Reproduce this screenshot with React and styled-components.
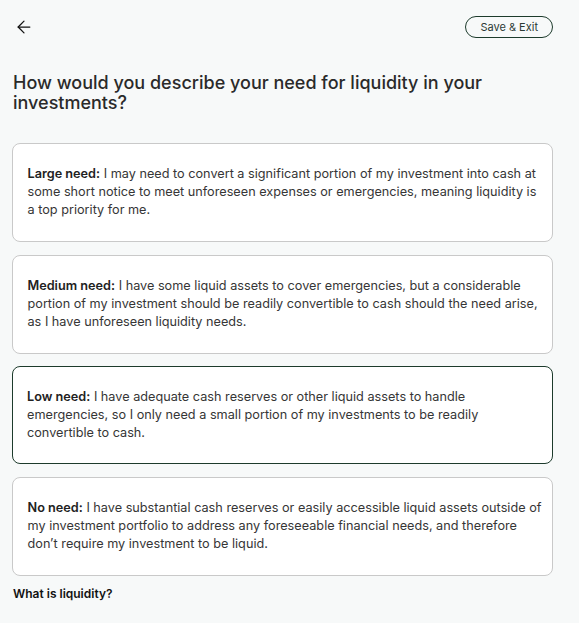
import React, { useState } from 'react';
import styled, { createGlobalStyle } from 'styled-components';
import { ArrowLeft } from 'lucide-react';

const GlobalStyle = createGlobalStyle`
  body {
    margin: 0;
    background-color: #f7f9f9;
    font-family: Inter, "Noto Sans", sans-serif;
  }
`;

const Page = styled.div`
  padding: 14px 26px 20px 12px;
  color: #2b2b2b;
`;

const TopBar = styled.div`
  display: flex;
  justify-content: space-between;
  align-items: center;
  height: 26px;
`;

const BackButton = styled.button`
  display: flex;
  align-items: center;
  background: none;
  border: none;
  padding: 0 0 0 2px;
  color: #111;
  cursor: pointer;
`;

const SaveButton = styled.button`
  height: 22px;
  padding: 0 14px;
  border: 1px solid #1d3b2c;
  border-radius: 999px;
  background: transparent;
  font-family: Inter, sans-serif;
  font-size: 11px;
  color: #2b3a35;
  cursor: pointer;
`;

const Title = styled.h1`
  margin: 33px 0 30px 1px;
  font-size: 18px;
  font-weight: 500;
  line-height: 20px;
  color: #2a2a2a;
  max-width: 500px;
`;

const OptionList = styled.div`
  display: flex;
  flex-direction: column;
  gap: 12.5px;
`;

const Option = styled.div`
  background: #fff;
  border: ${(p) => (p.$selected ? '1.5px solid #1d3b2c' : '1px solid #c9c9c9')};
  border-radius: 8px;
  padding: ${(p) => (p.$selected ? '20.5px 10px 21.5px 14px' : '21px 10.5px 22px 14.5px')};
  font-size: 12.7px;
  line-height: 18px;
  color: #363636;
  cursor: pointer;
`;

const Label = styled.span`
  font-weight: 600;
  color: #222;
`;

const HelpLink = styled.div`
  margin: 10px 0 0 1px;
  font-size: 12px;
  font-weight: 600;
  color: #111;
`;

const options = [
  {
    label: 'Large need',
    text: 'I may need to convert a significant portion of my investment into cash at some short notice to meet unforeseen expenses or emergencies, meaning liquidity is a top priority for me.',
  },
  {
    label: 'Medium need',
    text: 'I have some liquid assets to cover emergencies, but a considerable portion of my investment should be readily convertible to cash should the need arise, as I have unforeseen liquidity needs.',
  },
  {
    label: 'Low need',
    text: 'I have adequate cash reserves or other liquid assets to handle emergencies, so I only need a small portion of my investments to be readily convertible to cash.',
  },
  {
    label: 'No need',
    text: 'I have substantial cash reserves or easily accessible liquid assets outside of my investment portfolio to address any foreseeable financial needs, and therefore don\u2019t require my investment to be liquid.',
  },
];

const App = () => {
  const [selected, setSelected] = useState(2);

  return (
    <>
      <GlobalStyle />
      <Page>
        <TopBar>
          <BackButton aria-label="Back">
            <ArrowLeft size={20} strokeWidth={1.5} />
          </BackButton>
          <SaveButton>Save &amp; Exit</SaveButton>
        </TopBar>
        <Title>How would you describe your need for liquidity in your investments?</Title>
        <OptionList>
          {options.map((o, i) => (
            <Option key={o.label} $selected={selected === i} onClick={() => setSelected(i)}>
              <Label>{o.label}:</Label> {o.text}
            </Option>
          ))}
        </OptionList>
        <HelpLink>What is liquidity?</HelpLink>
      </Page>
    </>
  );
};

export default App;
